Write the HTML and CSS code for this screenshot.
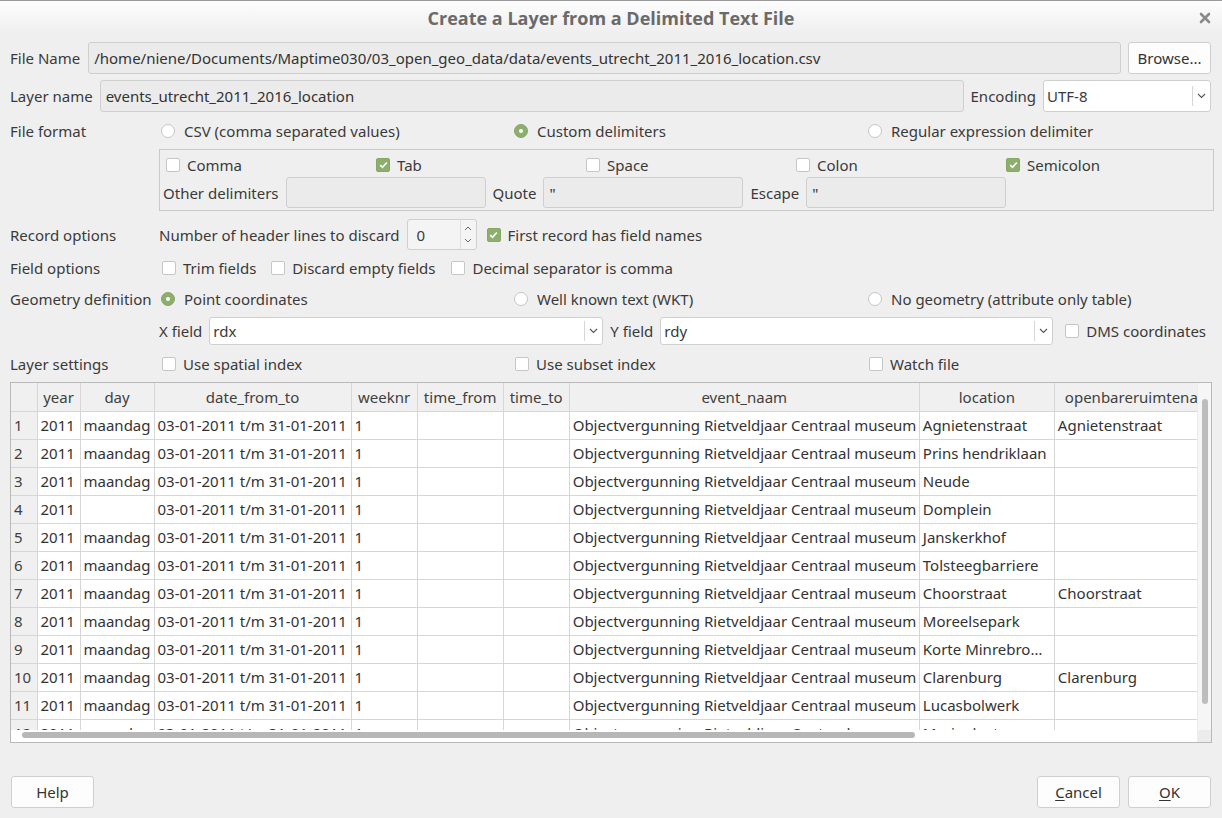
FILE: index.html
```html
<!DOCTYPE html>
<html>
<head>
<meta charset="utf-8">
<link rel="stylesheet" href="styles.css">
</head>
<body>
<div class="window">
  <div class="titlebar">
    <span class="title">Create a Layer from a Delimited Text File</span>
    <svg class="close" width="12" height="12" viewBox="0 0 12 12"><path d="M2 2 L10 10 M10 2 L2 10" stroke="#8a8a8a" stroke-width="2.6" stroke-linecap="round"/></svg>
  </div>
  <div class="content">
    <div class="row r-file">
      <span class="lbl">File Name</span>
      <div class="input ro grow">/home/niene/Documents/Maptime030/03_open_geo_data/data/events_utrecht_2011_2016_location.csv</div>
      <div class="btn browse">Browse...</div>
    </div>
    <div class="row r-layer">
      <span class="lbl">Layer name</span>
      <div class="input ro grow">events_utrecht_2011_2016_location</div>
      <span class="lbl enc">Encoding</span>
      <div class="combo enc-combo"><span class="val">UTF-8</span><span class="arrow"><svg width="9" height="6" viewBox="0 0 9 6"><path d="M1 1 L4.5 4.5 L8 1" fill="none" stroke="#555" stroke-width="1.1"/></svg></span></div>
    </div>
    <div class="row r-format">
      <span class="side">File format</span>
      <div class="three">
        <label class="opt"><span class="radio"></span>CSV (comma separated values)</label>
        <label class="opt"><span class="radio on"></span>Custom delimiters</label>
        <label class="opt"><span class="radio"></span>Regular expression delimiter</label>
      </div>
    </div>
    <div class="row r-group">
      <span class="side"></span>
      <div class="group">
        <div class="five">
          <label class="opt"><span class="cb"></span>Comma</label>
          <label class="opt"><span class="cb on"><svg width="9" height="8" viewBox="0 0 9 8"><path d="M1.2 4.2 L3.5 6.3 L7.8 1.5" fill="none" stroke="#fff" stroke-width="1.6"/></svg></span>Tab</label>
          <label class="opt"><span class="cb"></span>Space</label>
          <label class="opt"><span class="cb"></span>Colon</label>
          <label class="opt"><span class="cb on"><svg width="9" height="8" viewBox="0 0 9 8"><path d="M1.2 4.2 L3.5 6.3 L7.8 1.5" fill="none" stroke="#fff" stroke-width="1.6"/></svg></span>Semicolon</label>
        </div>
        <div class="delims">
          <span>Other delimiters</span>
          <div class="input ro dl"></div>
          <span>Quote</span>
          <div class="input ro dl">"</div>
          <span>Escape</span>
          <div class="input ro dl">"</div>
        </div>
      </div>
    </div>
    <div class="row r-record">
      <span class="side">Record options</span>
      <span class="txt">Number of header lines to discard</span>
      <div class="spin"><span class="val">0</span><span class="spin-arrows">
        <svg width="8" height="5" viewBox="0 0 8 5"><path d="M1 4 L4 1 L7 4" fill="none" stroke="#666" stroke-width="1"/></svg>
        <svg width="8" height="5" viewBox="0 0 8 5"><path d="M1 1 L4 4 L7 1" fill="none" stroke="#666" stroke-width="1"/></svg>
      </span></div>
      <label class="opt first"><span class="cb on"><svg width="9" height="8" viewBox="0 0 9 8"><path d="M1.2 4.2 L3.5 6.3 L7.8 1.5" fill="none" stroke="#fff" stroke-width="1.6"/></svg></span>First record has field names</label>
    </div>
    <div class="row r-field">
      <span class="side">Field options</span>
      <label class="opt o-trim"><span class="cb"></span>Trim fields</label>
      <label class="opt o-disc"><span class="cb"></span>Discard empty fields</label>
      <label class="opt"><span class="cb"></span>Decimal separator is comma</label>
    </div>
    <div class="row r-geom">
      <span class="side">Geometry definition</span>
      <div class="three">
        <label class="opt"><span class="radio on"></span>Point coordinates</label>
        <label class="opt"><span class="radio"></span>Well known text (WKT)</label>
        <label class="opt"><span class="radio"></span>No geometry (attribute only table)</label>
      </div>
    </div>
    <div class="row r-xy">
      <span class="side"></span>
      <span class="txt">X field</span>
      <div class="combo xy"><span class="val">rdx</span><span class="arrow"><svg width="9" height="6" viewBox="0 0 9 6"><path d="M1 1 L4.5 4.5 L8 1" fill="none" stroke="#555" stroke-width="1.1"/></svg></span></div>
      <span class="txt">Y field</span>
      <div class="combo xy y"><span class="val">rdy</span><span class="arrow"><svg width="9" height="6" viewBox="0 0 9 6"><path d="M1 1 L4.5 4.5 L8 1" fill="none" stroke="#555" stroke-width="1.1"/></svg></span></div>
      <label class="opt dms"><span class="cb"></span>DMS coordinates</label>
    </div>
    <div class="row r-layerset">
      <span class="side">Layer settings</span>
      <div class="three">
        <label class="opt"><span class="cb"></span>Use spatial index</label>
        <label class="opt"><span class="cb"></span>Use subset index</label>
        <label class="opt"><span class="cb"></span>Watch file</label>
      </div>
    </div>
    <div class="tableview">
      <div class="tv-main">
        <div class="tv-grid">
          <table>
            <colgroup>
              <col class="c-n"><col class="c-year"><col class="c-day"><col class="c-date"><col class="c-week"><col class="c-tf"><col class="c-tt"><col class="c-ev"><col class="c-loc"><col class="c-ob">
            </colgroup>
            <thead>
              <tr><th></th><th>year</th><th>day</th><th>date_from_to</th><th>weeknr</th><th>time_from</th><th>time_to</th><th>event_naam</th><th>location</th><th class="ob">openbareruimtenaam</th></tr>
            </thead>
            <tbody>
              <tr><td class="n">1</td><td>2011</td><td>maandag</td><td>03-01-2011 t/m 31-01-2011</td><td>1</td><td></td><td></td><td>Objectvergunning Rietveldjaar Centraal museum</td><td>Agnietenstraat</td><td>Agnietenstraat</td></tr>
              <tr><td class="n">2</td><td>2011</td><td>maandag</td><td>03-01-2011 t/m 31-01-2011</td><td>1</td><td></td><td></td><td>Objectvergunning Rietveldjaar Centraal museum</td><td>Prins hendriklaan</td><td></td></tr>
              <tr><td class="n">3</td><td>2011</td><td>maandag</td><td>03-01-2011 t/m 31-01-2011</td><td>1</td><td></td><td></td><td>Objectvergunning Rietveldjaar Centraal museum</td><td>Neude</td><td></td></tr>
              <tr><td class="n">4</td><td>2011</td><td></td><td>03-01-2011 t/m 31-01-2011</td><td>1</td><td></td><td></td><td>Objectvergunning Rietveldjaar Centraal museum</td><td>Domplein</td><td></td></tr>
              <tr><td class="n">5</td><td>2011</td><td>maandag</td><td>03-01-2011 t/m 31-01-2011</td><td>1</td><td></td><td></td><td>Objectvergunning Rietveldjaar Centraal museum</td><td>Janskerkhof</td><td></td></tr>
              <tr><td class="n">6</td><td>2011</td><td>maandag</td><td>03-01-2011 t/m 31-01-2011</td><td>1</td><td></td><td></td><td>Objectvergunning Rietveldjaar Centraal museum</td><td>Tolsteegbarriere</td><td></td></tr>
              <tr><td class="n">7</td><td>2011</td><td>maandag</td><td>03-01-2011 t/m 31-01-2011</td><td>1</td><td></td><td></td><td>Objectvergunning Rietveldjaar Centraal museum</td><td>Choorstraat</td><td>Choorstraat</td></tr>
              <tr><td class="n">8</td><td>2011</td><td>maandag</td><td>03-01-2011 t/m 31-01-2011</td><td>1</td><td></td><td></td><td>Objectvergunning Rietveldjaar Centraal museum</td><td>Moreelsepark</td><td></td></tr>
              <tr><td class="n">9</td><td>2011</td><td>maandag</td><td>03-01-2011 t/m 31-01-2011</td><td>1</td><td></td><td></td><td>Objectvergunning Rietveldjaar Centraal museum</td><td>Korte Minrebro…</td><td></td></tr>
              <tr><td class="n">10</td><td>2011</td><td>maandag</td><td>03-01-2011 t/m 31-01-2011</td><td>1</td><td></td><td></td><td>Objectvergunning Rietveldjaar Centraal museum</td><td>Clarenburg</td><td>Clarenburg</td></tr>
              <tr><td class="n">11</td><td>2011</td><td>maandag</td><td>03-01-2011 t/m 31-01-2011</td><td>1</td><td></td><td></td><td>Objectvergunning Rietveldjaar Centraal museum</td><td>Lucasbolwerk</td><td></td></tr>
              <tr><td class="n">12</td><td>2011</td><td>maandag</td><td>03-01-2011 t/m 31-01-2011</td><td>1</td><td></td><td></td><td>Objectvergunning Rietveldjaar Centraal museum</td><td>Mariaplaats</td><td></td></tr>
            </tbody>
          </table>
        </div>
        <div class="vscroll"><div class="vthumb"></div></div>
      </div>
      <div class="tv-bottom">
        <div class="hscroll"><div class="hthumb"></div></div>
        <div class="corner"></div>
      </div>
    </div>
    <div class="buttons">
      <div class="btn">Help</div>
      <div class="spacer"></div>
      <div class="btn"><u>C</u>ancel</div>
      <div class="btn"><u>O</u>K</div>
    </div>
  </div>
</div>
</body>
</html>
```
FILE: styles.css
```css
* { box-sizing: border-box; }
html, body { margin: 0; padding: 0; }
body {
  width: 1222px; height: 818px; overflow: hidden;
  background: #efefef;
  font-family: "Noto Sans", "Open Sans", sans-serif;
  font-size: 15px;
  color: #3a3a3a;
}
.window { width: 1222px; height: 818px; border-top: 1px solid #9a9a9a; background: #efefef; }
.titlebar {
  height: 35px;
  background: linear-gradient(#fdfdfd, #eeeeee);
  display: flex; align-items: center; justify-content: center;
  position: relative;
}
.title { font-family: "Open Sans", "Noto Sans", sans-serif; font-weight: bold; font-size: 18px; color: #6a6a6a; margin-top: -1px; }
.close { position: absolute; right: 11px; top: 11px; }
.content { padding: 0 11px 0 10px; display: flex; flex-direction: column; }
.row { display: flex; align-items: center; }
.lbl { white-space: nowrap; }
.side { width: 149px; flex: none; white-space: nowrap; }
.grow { flex: 1; }
.input {
  height: 32px; border: 1px solid #cfcfcf; border-radius: 3px;
  background: #ebebeb; padding: 0 5px; display: flex; align-items: center;
  white-space: nowrap; overflow: hidden; color: #333;
}
.btn {
  height: 32px; width: 83px; border: 1px solid #cfcfcf; border-radius: 3px;
  background: #fdfdfd; display: flex; align-items: center; justify-content: center;
  color: #333;
}
.r-file { margin-top: 6px; height: 32px; }
.r-file .lbl { margin-right: 8px; }
.r-file .browse { margin-left: 7px; }
.r-layer { margin-top: 6px; height: 32px; }
.r-layer .lbl { margin-right: 7px; }
.r-layer .enc { margin: 0 7px 0 7px; }
.combo {
  height: 32px; border: 1px solid #cfcfcf; border-radius: 3px; background: #fff;
  display: flex; align-items: center; padding-left: 3px;
}
.combo .val { flex: 1; }
.combo .arrow { width: 18px; height: 20px; border-left: 1px solid #d6d6d6; display: flex; align-items: center; justify-content: center; }
.enc-combo { width: 168px; }
.r-format { margin-top: 7px; height: 24px; }
.three { display: grid; grid-template-columns: 353px 354px 1fr; flex: 1; }
.opt { display: flex; align-items: center; white-space: nowrap; }
.radio {
  width: 14px; height: 14px; border-radius: 50%; border: 1px solid #c6c6c6; background: #fff;
  margin: 0 9px 0 2px; flex: none; display: flex; align-items: center; justify-content: center;
}
.radio.on { background: #8daf6d; border-color: #86a766; }
.radio.on::after { content: ""; width: 4px; height: 4px; border-radius: 50%; background: #fff; }
.cb {
  width: 14px; height: 14px; border: 1px solid #c6c6c6; border-radius: 2px; background: #fff;
  margin: 0 7px 0 3px; flex: none; display: flex; align-items: center; justify-content: center;
}
.cb.on { background: #8daf6d; border-color: #86a766; }
.r-group { margin-top: 6px; }
.group {
  flex: 1; height: 62px; border: 1px solid #c9c9c9; padding: 3px 0 0 3px;
  display: flex; flex-direction: column;
}
.five { display: grid; grid-template-columns: repeat(5, 210px); height: 24px; }
.delims { display: flex; align-items: center; height: 31px; margin-top: 0; }
.delims .dl { width: 200px; height: 31px; margin: 0 7px; }
.r-record { margin-top: 8px; height: 31px; }
.txt { white-space: nowrap; }
.spin {
  width: 70px; height: 31px; margin-left: 7px; border: 1px solid #cfcfcf; border-radius: 3px;
  background: #f4f4f4; display: flex; align-items: center; padding-left: 9px;
}
.spin .val { flex: 1; }
.spin-arrows { width: 16px; height: 29px; display: flex; flex-direction: column; align-items: center; justify-content: space-around; border-left: 1px solid #e0e0e0; padding: 3px 0; }
.first { margin-left: 7px; }
.r-field { margin-top: 6px; height: 24px; }
.o-trim { margin-right: 12px; }
.o-disc { margin-right: 13px; }
.r-geom { margin-top: 7px; height: 24px; }
.r-xy { margin-top: 6px; height: 28px; }
.r-xy .combo.xy { height: 28px; width: 394px; margin: 0 7px; }
.r-xy .combo.y { width: 393px; }
.dms { margin-left: 2px; }
.r-layerset { margin-top: 7px; height: 24px; }
.tableview {
  margin-top: 6px; height: 361px; border: 1px solid #b9b9b9; background: #fff;
  display: flex; flex-direction: column; margin-right: -1px;
}
.tv-main { flex: 1; display: flex; min-height: 0; }
.tv-grid { flex: 1; overflow: hidden; }
table { border-collapse: collapse; table-layout: fixed; width: 1230px; font-size: 15px; }
col.c-n { width: 26px; } col.c-year { width: 43px; } col.c-day { width: 74px; } col.c-date { width: 197px; }
col.c-week { width: 66px; } col.c-tf { width: 86px; } col.c-tt { width: 66px; } col.c-ev { width: 350px; }
col.c-loc { width: 135px; } col.c-ob { width: 186px; }
th {
  height: 28px; font-weight: normal; background: #f0f0f0; color: #3f3f3f;
  border-right: 1px solid #d6d6d6; border-bottom: 1px solid #d6d6d6; text-align: center;
  white-space: nowrap; overflow: hidden; padding: 0;
}
th.ob { text-align: left; padding-left: 10px; }
td {
  height: 28px; border-right: 1px solid #d6d6d6; border-bottom: 1px solid #d6d6d6;
  padding: 0 3px; white-space: nowrap; overflow: hidden; color: #333;
}
td.n { background: #f0f0f0; padding-left: 3px; color: #3f3f3f; }
.vscroll { width: 14px; flex: none; background: #f6f6f6; border-left: 1px solid #ececec; padding: 14px 0 8px 0; display: flex; justify-content: center; }
.vthumb { width: 6px; height: 305px; border-radius: 3px; background: #bdbdbd; margin-top: 2px; }
.tv-bottom { height: 12px; display: flex; flex: none; }
.hscroll { flex: 1; background: #fff; padding: 2px 0 0 11px; }
.hthumb { width: 893px; height: 6px; border-radius: 3px; background: #b7b7b7; }
.corner { width: 14px; background: #ececec; }
.buttons { margin-top: 33px; display: flex; gap: 8px; padding-left: 1px; }
.spacer { flex: 1; }
u { text-decoration: underline; text-underline-offset: 2px; }
```
